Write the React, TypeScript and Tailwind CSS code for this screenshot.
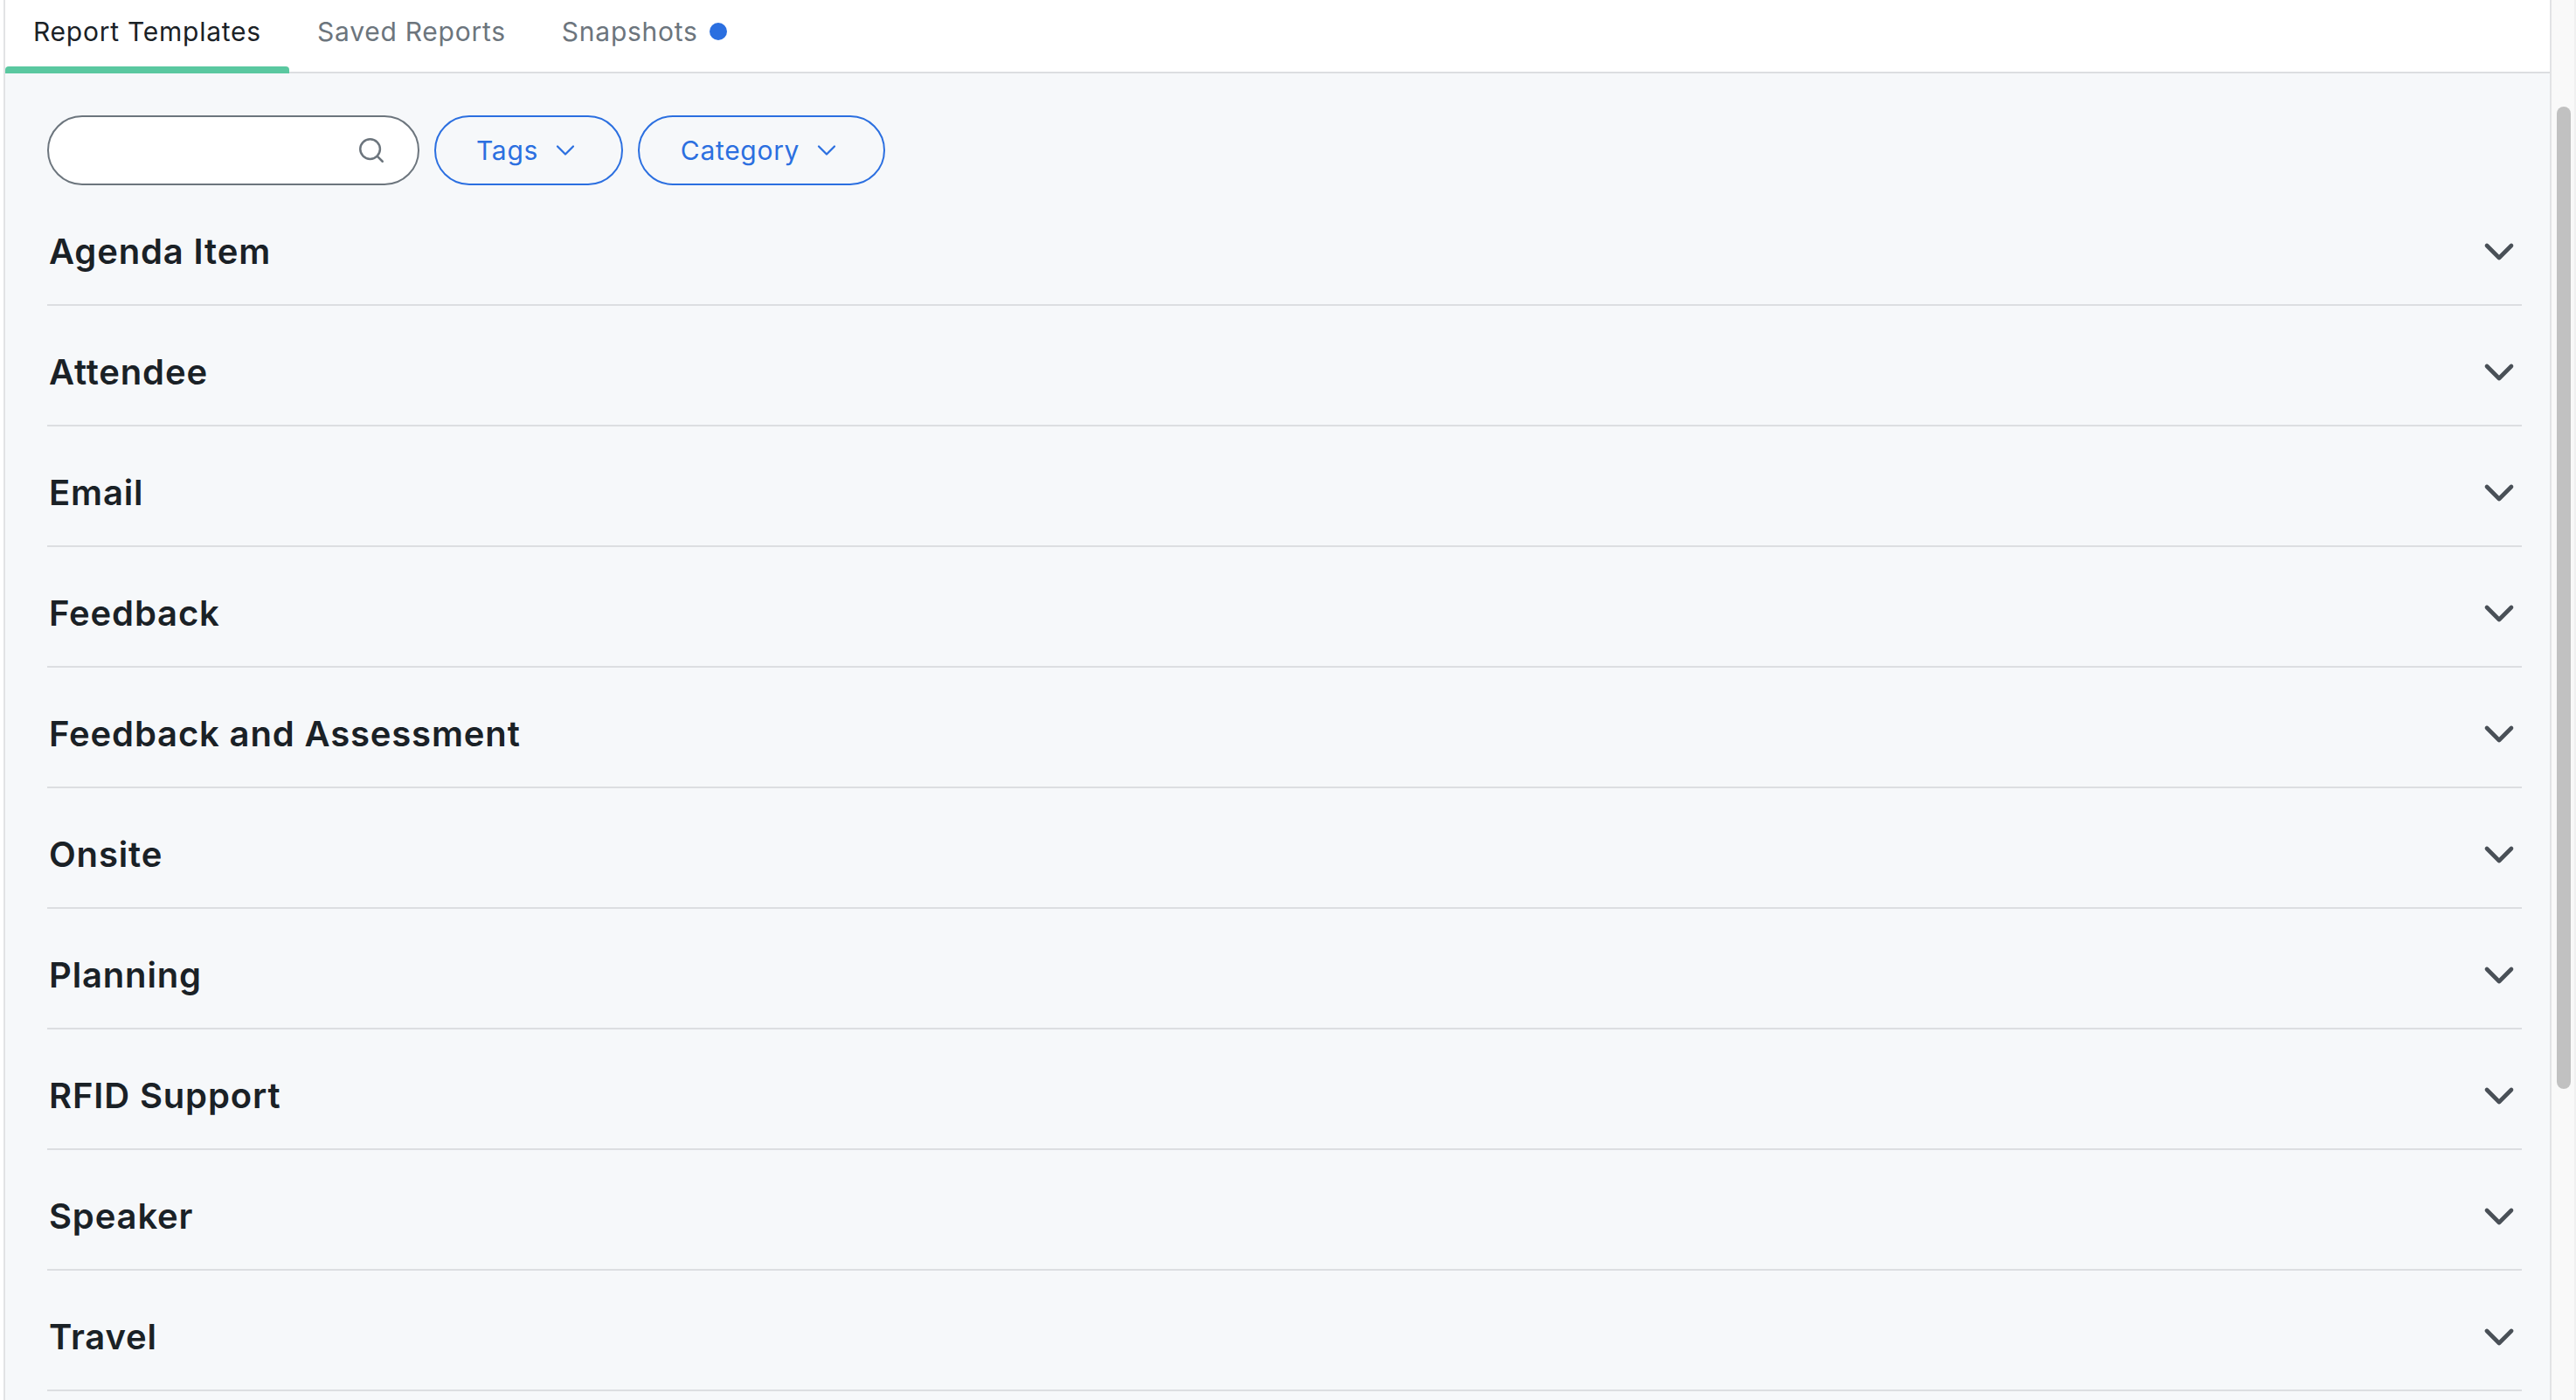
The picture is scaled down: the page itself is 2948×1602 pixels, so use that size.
import { ChevronDown, Search } from "lucide-react";

const CATEGORIES = [
  "Agenda Item",
  "Attendee",
  "Email",
  "Feedback",
  "Feedback and Assessment",
  "Onsite",
  "Planning",
  "RFID Support",
  "Speaker",
  "Travel",
];

function FilterButton({ label, width }: { label: string; width: string }) {
  return (
    <button
      className={`flex h-[80px] items-center justify-center gap-[13px] rounded-[40px] border-2 border-[#2b6fe0] text-[30px] tracking-[0.7px] text-[#2b6fe0] ${width}`}
    >
      {label}
      <ChevronDown size={36} strokeWidth={1.5} />
    </button>
  );
}

export default function App() {
  return (
    <div className="flex h-screen overflow-hidden bg-white font-['Inter',sans-serif]">
      <main className="ml-[4px] flex-1 border-x-2 border-[#e2e3e5] bg-[#f6f8fa]">
        <nav className="flex h-[84px] border-b-2 border-[#dcdee1] bg-white text-[30px] tracking-[0.75px]">
          <div className="relative h-[84px] w-[325px] pl-[32px] pt-[14px] text-[#1a2126]">
            Report Templates
            <div className="absolute bottom-0 left-0 h-[8px] w-full rounded-t-[4px] bg-[#5ac8a0]" />
          </div>
          <div className="pl-[32px] pt-[14px] text-[#6c757d]">Saved Reports</div>
          <div className="flex items-start pl-[64px] pt-[14px] text-[#6c757d]">
            Snapshots
            <span className="ml-[13px] mt-[12px] h-[20px] w-[20px] rounded-full bg-[#2b6fe0]" />
          </div>
        </nav>

        <div className="ml-[48px] mr-[32px] pt-[48px]">
          <div className="flex gap-[17px]">
            <div className="flex h-[80px] w-[426px] items-center justify-end rounded-[40px] border-2 border-[#6c757d] bg-white pr-[36px] text-[#6c757d]">
              <Search size={34} strokeWidth={1.75} />
            </div>
            <FilterButton label="Tags" width="w-[216px]" />
            <FilterButton label="Category" width="w-[283px]" />
          </div>

          {CATEGORIES.map((category) => (
            <div
              key={category}
              className="flex h-[138px] items-center justify-between border-b-2 border-[#dcdee1] pl-[2px] pt-[15px] text-[40px] font-semibold tracking-[0.85px] text-[#1a2126]"
            >
              {category}
              <ChevronDown size={56} strokeWidth={2} className="-mr-[2px] text-[#495057]" />
            </div>
          ))}
        </div>
      </main>

      <div className="w-[28px] border-r-2 border-[#f0f0f0] bg-[#f9f9f9] pl-[6px] pt-[122px]">
        <div className="h-[1124px] w-[16px] rounded-full bg-[#c1c1c1]" />
      </div>
    </div>
  );
}
